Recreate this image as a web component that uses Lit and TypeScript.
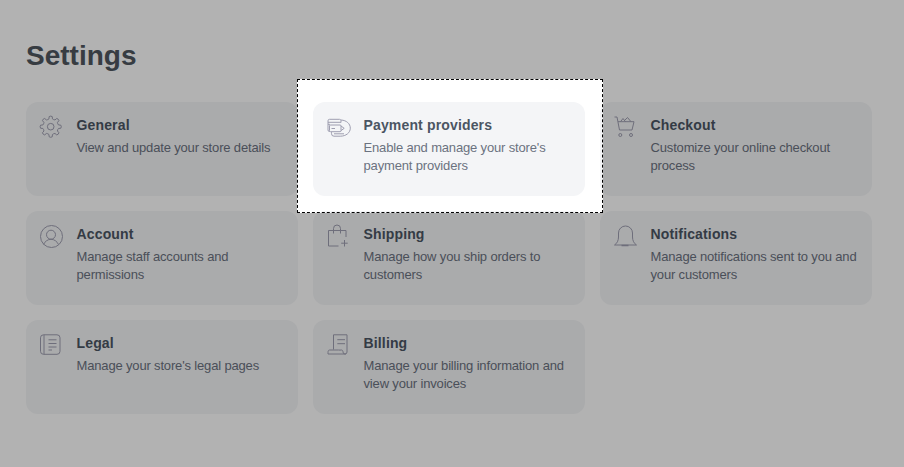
import { LitElement, html, css, svg } from "lit";
import { customElement } from "lit/decorators.js";

function gearPath(cx: number, cy: number): string {
  const pts: string[] = [];
  const teeth = 8;
  const outer = 10.6;
  const inner = 8;
  for (let i = 0; i < teeth; i++) {
    const a = (i * 2 * Math.PI) / teeth - Math.PI / 2;
    const w = 0.2;
    const g = 0.2;
    const p = (r: number, t: number) =>
      `${(cx + r * Math.cos(t)).toFixed(2)} ${(cy + r * Math.sin(t)).toFixed(2)}`;
    if (i === 0) pts.push(`M${p(inner, a - g - 0.02)}`);
    else pts.push(`L${p(inner, a - g - 0.02)}`);
    pts.push(`Q${p(outer + 0.6, a - w)} ${p(outer, a)}`);
    pts.push(`Q${p(outer + 0.6, a + w)} ${p(inner, a + g + 0.02)}`);
    const mid = a + Math.PI / teeth;
    pts.push(`Q${p(inner - 0.6, mid)} ${p(inner, a + (2 * Math.PI) / teeth - g - 0.02)}`);
  }
  return pts.join(" ") + "Z";
}

const icons: Record<string, unknown> = {
  general: svg`<circle cx="10.700" cy="10.700" r="3.300"/><path d=${gearPath(10.7, 10.7)} stroke-linejoin="round"/>`,
  payment: svg`<path d="M3 15.500H2.500A1.500 1.500 0 0 1 1 14V4.800a1.500 1.500 0 0 1 1.500-1.500H12.500A1.500 1.500 0 0 1 14 4.800V6.500M1 6.300H14M1 8.300H3"/><rect x="2.500" y="9" width="11.500" height="6.700" rx="1"/><path d="M4.500 12.500H8M14 10l3.200 2.300-3.200 2.300"/><path d="M14 4c5.500.3 9.300 3.700 9.300 8.200 0 4.500-4.300 8-10 8H7a2.500 2.500 0 0 1-2.500-2.500v-1.500M7 17.800h10"/>`,
  checkout: svg`<path d="M.5 1H3L5.500 14H18L20 5.700H4"/><path d="M6.500 5.700L9 2.500l2.500 3.200M10.500 4.500L13.500 1.500 17 5.700"/><circle cx="6.300" cy="19" r="1.500"/><circle cx="17" cy="19" r="1.500"/>`,
  account: svg`<circle cx="11.500" cy="11.500" r="11"/><circle cx="11" cy="9.700" r="4.500"/><path d="M3.500 19.500C5 16.300 7.800 14.300 11 14.300s6 2 7.500 5.200"/>`,
  shipping: svg`<path d="M11.500 21H1.500V5.500H19V12"/><path d="M6.500 8.500V3.500a3.500 3.500 0 0 1 7 0v5"/><path d="M17.500 15v6.500M14.200 18.200H20.700"/>`,
  bell: svg`<path d="M.5 20C3 18.500 4.500 15.500 4.500 12V8a7 7 0 0 1 14 0v4c0 3.500 1.500 6.500 4 8z" stroke-linejoin="round"/><path d="M7.500 20.500H14.500" stroke-width="1.500"/>`,
  legal: svg`<rect x=".5" y=".8" width="19.500" height="19.500" rx="3"/><path d="M4 .8V20.300M8.500 5.800H16.500M8.500 9.500H16.500M8.500 13H16.500M8.500 16H12"/>`,
  billing: svg`<path d="M6.500 15.500V.8H20V18a2 2 0 0 1-4 0c0-1-.5-2-1.500-2-1 0-2 .3-3 0H2.500C1.500 16 1 17 1 18.500V20H19"/><path d="M10.300 5.700H18M10.300 9.700H18"/>`,
};

const cards = [
  ["general", "General", "View and update your store details"],
  ["payment", "Payment providers", "Enable and manage your store's payment providers"],
  ["checkout", "Checkout", "Customize your online checkout process"],
  ["account", "Account", "Manage staff accounts and permissions"],
  ["shipping", "Shipping", "Manage how you ship orders to customers"],
  ["bell", "Notifications", "Manage notifications sent to you and your customers"],
  ["legal", "Legal", "Manage your store's legal pages"],
  ["billing", "Billing", "Manage your billing information and view your invoices"],
];

@customElement("app-root")
export class AppRoot extends LitElement {
  static styles = css`
    :host {
      display: block;
      position: relative;
      width: 904px;
      height: 467px;
      overflow: hidden;
      background: #fff;
      font-family: "Liberation Sans", Arial, sans-serif;
    }
    .page {
      padding: 40px 32px 0 26px;
    }
    h1 {
      margin: 0 0 30px;
      height: 32px;
      font: 700 28px/32px "Liberation Sans", Arial, sans-serif;
      color: #50575f;
    }
    .grid {
      display: grid;
      grid-template-columns: repeat(3, 272px);
      grid-auto-rows: 94px;
      gap: 15px;
    }
    .card {
      display: flex;
      gap: 12px;
      padding: 14px;
      border-radius: 12px;
      background: #f4f5f7;
    }
    svg.icon {
      flex: none;
      width: 24px;
      height: 24px;
      fill: none;
      stroke: #9e9eb0;
      stroke-width: 1;
      overflow: visible;
    }
    .text {
      padding-left: 0.5px;
    }
    h2 {
      margin: 0;
      font: 700 14px/18px "Liberation Sans", Arial, sans-serif;
      letter-spacing: 0.15px;
      color: #4b5563;
    }
    p {
      margin: 5px 0 0;
      font: 400 13px/18px "Liberation Sans", Arial, sans-serif;
      letter-spacing: -0.16px;
      color: #6b7280;
    }
    .spot {
      position: absolute;
      left: 297px;
      top: 79px;
      width: 306px;
      height: 134px;
      box-sizing: border-box;
      border: 1px dashed #000;
      box-shadow: 0 0 0 1000px rgba(0, 0, 0, 0.3);
    }
  `;

  render() {
    return html`
      <div class="page">
        <h1>Settings</h1>
        <div class="grid">
          ${cards.map(
            ([icon, title, desc]) => html`
              <div class="card">
                <svg class="icon" viewBox="0 0 24 24">${icons[icon]}</svg>
                <div class="text">
                  <h2>${title}</h2>
                  <p>${desc}</p>
                </div>
              </div>
            `
          )}
        </div>
      </div>
      <div class="spot"></div>
    `;
  }
}
